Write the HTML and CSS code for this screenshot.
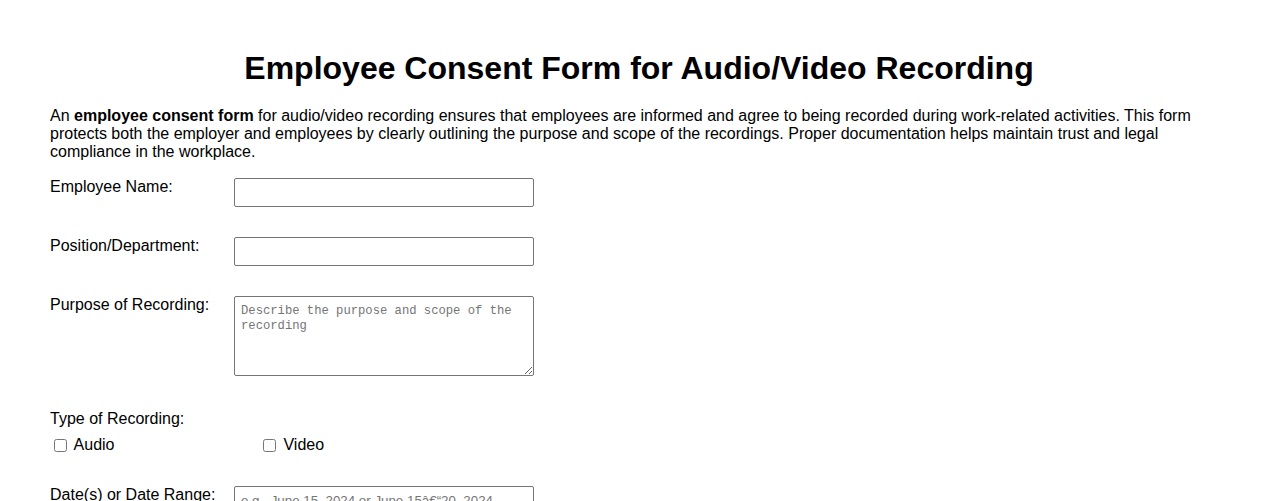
FILE: index.html
```html
<!DOCTYPE html>
<html lang="en">
<head>
<meta charset="utf-8">
<title>Employee Consent Form for Audio/Video Recording</title>
<link rel="stylesheet" href="styles.css">
</head>
<body>
<main class="page">
  <h1 class="title">Employee Consent Form for Audio/Video Recording</h1>
  <p class="intro">An <strong>employee consent form</strong> for audio/video recording ensures that employees are informed and agree to being recorded during work-related activities. This form protects both the employer and employees by clearly outlining the purpose and scope of the recordings. Proper documentation helps maintain trust and legal compliance in the workplace.</p>
  <form class="form">
    <div class="row">
      <label class="label" for="name">Employee Name:</label>
      <input class="field" type="text" id="name">
    </div>
    <div class="row">
      <label class="label" for="pos">Position/Department:</label>
      <input class="field" type="text" id="pos">
    </div>
    <div class="row row-area">
      <label class="label" for="purpose">Purpose of Recording:</label>
      <textarea class="field area" id="purpose" placeholder="Describe the purpose and scope of the recording"></textarea>
    </div>
    <div class="group">
      <div class="group-title">Type of Recording:</div>
      <div class="options">
        <label class="option"><input class="check" type="checkbox"> Audio</label>
        <label class="option"><input class="check" type="checkbox"> Video</label>
      </div>
    </div>
    <div class="row">
      <label class="label" for="dates">Date(s) or Date Range:</label>
      <input class="field" type="text" id="dates" placeholder="e.g., June 15, 2024 or June 15â€“20, 2024">
    </div>
  </form>
</main>
</body>
</html>
```

FILE: styles.css
```css
html, body {
  margin: 0;
  padding: 0;
  background: #ffffff;
}

body {
  font-family: "Liberation Sans", Arial, sans-serif;
  font-size: 16px;
  color: #000000;
}

.page {
  padding: 29px 50px 0;
}

.title {
  font-size: 32px;
  font-weight: bold;
  text-align: center;
  margin: 21px 0 20px;
  line-height: 37px;
}

.intro {
  margin: 0 0 17px;
  line-height: 18px;
}

.form {
  display: flex;
  flex-direction: column;
}

.row {
  display: flex;
  align-items: flex-start;
  margin-bottom: 30px;
}

.row-area {
  margin-bottom: 34px;
}

.label {
  width: 184px;
  flex: none;
  line-height: 18px;
}

.field {
  box-sizing: border-box;
  width: 300px;
  height: 29px;
  margin: 0;
  padding: 6px;
  border: 1px solid #767676;
  border-radius: 2px;
  font-family: "Liberation Sans", Arial, sans-serif;
  font-size: 13.33px;
  background: #ffffff;
}

.field::placeholder {
  color: #757575;
}

.area {
  height: 80px;
  padding: 7px 6px 6px;
  font-family: "Liberation Mono", monospace;
  font-size: 12.2px;
  line-height: 15px;
  resize: vertical;
}

.group {
  display: flex;
  flex-direction: column;
  gap: 8px;
  margin-bottom: 31px;
}

.group-title {
  line-height: 18px;
}

.options {
  display: flex;
}

.option {
  width: 209px;
  line-height: 18px;
}

.check {
  width: 13px;
  height: 13px;
  margin: 3px 3px 3px 4px;
  vertical-align: -2px;
}
```
